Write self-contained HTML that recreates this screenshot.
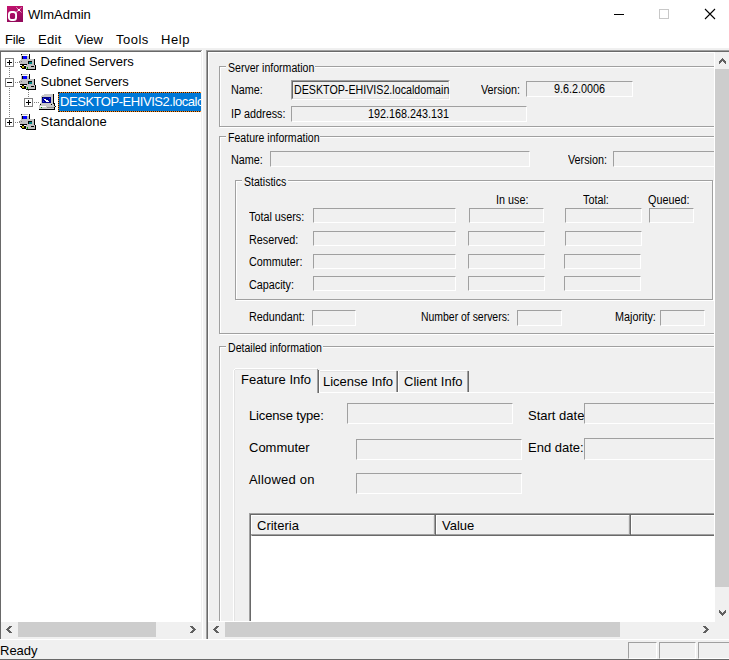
<!DOCTYPE html>
<html><head><meta charset="utf-8">
<style>
*{box-sizing:border-box;margin:0;padding:0}
html,body{width:729px;height:660px;overflow:hidden;background:#fff}
body{position:relative;font-family:"Liberation Sans",sans-serif;color:#000}
.a{position:absolute}
.t{position:absolute;white-space:pre;line-height:1;font-family:"Liberation Sans",sans-serif}
.ui{font-size:13px}
.dl{font-size:12px;transform:scaleX(0.9);transform-origin:0 0}
.hl{position:absolute;height:1px}
.vl{position:absolute;width:1px}
.sb{position:absolute;border-top:1px solid #a0a0a0;border-left:1px solid #a0a0a0;border-bottom:1px solid #fff;border-right:1px solid #fff;background:#f0f0f0}
.eb{position:absolute;border-top:1px solid #a0a0a0;border-left:1px solid #a0a0a0;border-bottom:1px solid #fff;border-right:1px solid #fff;background:#f0f0f0}
.eb:before{content:"";position:absolute;left:0;top:0;right:0;bottom:0;border-top:1px solid #696969;border-left:1px solid #696969;border-bottom:1px solid #e3e3e3;border-right:1px solid #e3e3e3}
.gl{position:absolute;background:#f0f0f0;padding:0 2px;white-space:pre;line-height:1;font-size:12px}
.gl span{display:inline-block;transform:scaleX(0.9);transform-origin:0 0;margin-right:-0.13em}
</style></head><body>
<svg class="a" style="left:7px;top:6px" width="16" height="16" viewBox="0 0 16 16">
<defs><linearGradient id="ig" x1="0" y1="0" x2="0.3" y2="1"><stop offset="0" stop-color="#c4136f"/><stop offset="1" stop-color="#940a5b"/></linearGradient></defs>
<rect x="0" y="0" width="16" height="16" fill="url(#ig)"/>
<rect x="1.95" y="5.95" width="7.1" height="8.1" rx="2.6" fill="none" stroke="#fff" stroke-width="1.9"/>
<path d="M9.3 1.3 L14.5 6.5 M14.5 1.3 L9.3 6.5" stroke="#fff" stroke-opacity="0.6" stroke-width="1"/>
<rect x="10.9" y="3" width="2" height="2" fill="#fff"/>
<path d="M8.6 6.6 L10.3 5" stroke="#fff" stroke-opacity="0.4" stroke-width="0.8"/>
</svg>
<div class="t ui" style="left:28px;top:8px">WlmAdmin</div>
<div class="hl" style="left:614px;top:14px;width:10px;background:#000"></div>
<div class="a" style="left:659px;top:9px;width:10px;height:10px;border:1px solid #c8c8c8"></div>
<svg class="a" style="left:704px;top:8px" width="12" height="12" viewBox="0 0 12 12"><path d="M1 1 L11 11 M11 1 L1 11" stroke="#000" stroke-width="1.1"/></svg>
<div class="t ui" style="left:5px;top:33px;letter-spacing:-0.2px">File</div>
<div class="t ui" style="left:38px;top:33px;letter-spacing:0.3px">Edit</div>
<div class="t ui" style="left:75px;top:33px">View</div>
<div class="t ui" style="left:116px;top:33px;letter-spacing:0.5px">Tools</div>
<div class="t ui" style="left:161px;top:33px;letter-spacing:0.6px">Help</div>
<div class="a" style="left:0;top:48px;width:729px;height:612px;background:#f0f0f0"></div>
<div class="a" style="left:0;top:50px;width:203px;height:590px;background:#fff"></div>
<div class="hl" style="left:0;top:50px;width:202px;background:#a0a0a0"></div>
<div class="hl" style="left:0;top:51px;width:201px;background:#696969"></div>
<div class="vl" style="left:0;top:51px;height:588px;background:#696969"></div>
<div class="vl" style="left:201px;top:52px;height:570px;background:#f0f0f0"></div>
<div class="vl" style="left:202px;top:50px;height:589px;background:#fff"></div>
<div class="a" style="left:1px;top:52px;width:200px;height:570px;overflow:hidden">
<div class="a" style="left:-1px;top:-52px;width:729px;height:660px">
<div class="a" style="left:9px;top:68px;width:1px;height:1px;background:#808080"></div>
<div class="a" style="left:9px;top:70px;width:1px;height:1px;background:#808080"></div>
<div class="a" style="left:9px;top:72px;width:1px;height:1px;background:#808080"></div>
<div class="a" style="left:9px;top:74px;width:1px;height:1px;background:#808080"></div>
<div class="a" style="left:9px;top:76px;width:1px;height:1px;background:#808080"></div>
<div class="a" style="left:9px;top:78px;width:1px;height:1px;background:#808080"></div>
<div class="a" style="left:9px;top:80px;width:1px;height:1px;background:#808080"></div>
<div class="a" style="left:9px;top:82px;width:1px;height:1px;background:#808080"></div>
<div class="a" style="left:9px;top:84px;width:1px;height:1px;background:#808080"></div>
<div class="a" style="left:9px;top:86px;width:1px;height:1px;background:#808080"></div>
<div class="a" style="left:9px;top:88px;width:1px;height:1px;background:#808080"></div>
<div class="a" style="left:9px;top:90px;width:1px;height:1px;background:#808080"></div>
<div class="a" style="left:9px;top:92px;width:1px;height:1px;background:#808080"></div>
<div class="a" style="left:9px;top:94px;width:1px;height:1px;background:#808080"></div>
<div class="a" style="left:9px;top:96px;width:1px;height:1px;background:#808080"></div>
<div class="a" style="left:9px;top:98px;width:1px;height:1px;background:#808080"></div>
<div class="a" style="left:9px;top:100px;width:1px;height:1px;background:#808080"></div>
<div class="a" style="left:9px;top:102px;width:1px;height:1px;background:#808080"></div>
<div class="a" style="left:9px;top:104px;width:1px;height:1px;background:#808080"></div>
<div class="a" style="left:9px;top:106px;width:1px;height:1px;background:#808080"></div>
<div class="a" style="left:9px;top:108px;width:1px;height:1px;background:#808080"></div>
<div class="a" style="left:9px;top:110px;width:1px;height:1px;background:#808080"></div>
<div class="a" style="left:9px;top:112px;width:1px;height:1px;background:#808080"></div>
<div class="a" style="left:9px;top:114px;width:1px;height:1px;background:#808080"></div>
<div class="a" style="left:9px;top:116px;width:1px;height:1px;background:#808080"></div>
<div class="a" style="left:15px;top:62px;width:1px;height:1px;background:#808080"></div>
<div class="a" style="left:17px;top:62px;width:1px;height:1px;background:#808080"></div>
<div class="a" style="left:19px;top:62px;width:1px;height:1px;background:#808080"></div>
<div class="a" style="left:15px;top:82px;width:1px;height:1px;background:#808080"></div>
<div class="a" style="left:17px;top:82px;width:1px;height:1px;background:#808080"></div>
<div class="a" style="left:19px;top:82px;width:1px;height:1px;background:#808080"></div>
<div class="a" style="left:15px;top:122px;width:1px;height:1px;background:#808080"></div>
<div class="a" style="left:17px;top:122px;width:1px;height:1px;background:#808080"></div>
<div class="a" style="left:19px;top:122px;width:1px;height:1px;background:#808080"></div>
<div class="a" style="left:28px;top:88px;width:1px;height:1px;background:#808080"></div>
<div class="a" style="left:28px;top:90px;width:1px;height:1px;background:#808080"></div>
<div class="a" style="left:28px;top:92px;width:1px;height:1px;background:#808080"></div>
<div class="a" style="left:28px;top:94px;width:1px;height:1px;background:#808080"></div>
<div class="a" style="left:28px;top:96px;width:1px;height:1px;background:#808080"></div>
<div class="a" style="left:34px;top:102px;width:1px;height:1px;background:#808080"></div>
<div class="a" style="left:36px;top:102px;width:1px;height:1px;background:#808080"></div>
<div class="a" style="left:38px;top:102px;width:1px;height:1px;background:#808080"></div>
<div class="a" style="left:5px;top:58px;width:9px;height:9px;border:1px solid #808080;background:#fff"></div>
<div class="hl" style="left:7px;top:62px;width:5px;background:#000"></div>
<div class="vl" style="left:9px;top:60px;height:5px;background:#000"></div>
<div class="a" style="left:5px;top:78px;width:9px;height:9px;border:1px solid #808080;background:#fff"></div>
<div class="hl" style="left:7px;top:82px;width:5px;background:#000"></div>
<div class="a" style="left:24px;top:98px;width:9px;height:9px;border:1px solid #808080;background:#fff"></div>
<div class="hl" style="left:26px;top:102px;width:5px;background:#000"></div>
<div class="vl" style="left:28px;top:100px;height:5px;background:#000"></div>
<div class="a" style="left:5px;top:118px;width:9px;height:9px;border:1px solid #808080;background:#fff"></div>
<div class="hl" style="left:7px;top:122px;width:5px;background:#000"></div>
<div class="vl" style="left:9px;top:120px;height:5px;background:#000"></div>
<svg class="a" style="left:19px;top:53px" width="18" height="18" viewBox="0 0 18 18" shape-rendering="crispEdges"><rect x="2" y="1" width="1" height="1" fill="#000"/><rect x="3" y="1" width="6" height="1" fill="#c0c0c0"/><rect x="9" y="1" width="1" height="1" fill="#fff"/><rect x="10" y="1" width="1" height="1" fill="#000"/><rect x="2" y="2" width="1" height="1" fill="#c0c0c0"/><rect x="3" y="2" width="7" height="1" fill="#fff"/><rect x="10" y="2" width="1" height="1" fill="#000"/><rect x="2" y="3" width="1" height="1" fill="#c0c0c0"/><rect x="3" y="3" width="1" height="1" fill="#000"/><rect x="4" y="3" width="4" height="1" fill="#0000ff"/><rect x="8" y="3" width="2" height="1" fill="#c0c0c0"/><rect x="10" y="3" width="1" height="1" fill="#000"/><rect x="2" y="4" width="1" height="1" fill="#c0c0c0"/><rect x="3" y="4" width="1" height="1" fill="#000"/><rect x="4" y="4" width="4" height="1" fill="#0000ff"/><rect x="8" y="4" width="2" height="1" fill="#c0c0c0"/><rect x="10" y="4" width="1" height="1" fill="#000"/><rect x="2" y="5" width="1" height="1" fill="#c0c0c0"/><rect x="3" y="5" width="1" height="1" fill="#000"/><rect x="4" y="5" width="4" height="1" fill="#0000ff"/><rect x="8" y="5" width="2" height="1" fill="#c0c0c0"/><rect x="10" y="5" width="1" height="1" fill="#000"/><rect x="2" y="6" width="13" height="1" fill="#c0c0c0"/><rect x="15" y="6" width="1" height="1" fill="#000"/><rect x="1" y="7" width="14" height="1" fill="#c0c0c0"/><rect x="15" y="7" width="1" height="1" fill="#000"/><rect x="0" y="8" width="1" height="1" fill="#808080"/><rect x="1" y="8" width="1" height="1" fill="#c0c0c0"/><rect x="2" y="8" width="1" height="1" fill="#808080"/><rect x="3" y="8" width="6" height="1" fill="#c0c0c0"/><rect x="9" y="8" width="4" height="1" fill="#000"/><rect x="13" y="8" width="2" height="1" fill="#c0c0c0"/><rect x="15" y="8" width="1" height="1" fill="#000"/><rect x="0" y="9" width="1" height="1" fill="#808080"/><rect x="1" y="9" width="8" height="1" fill="#c0c0c0"/><rect x="9" y="9" width="1" height="1" fill="#000"/><rect x="10" y="9" width="3" height="1" fill="#008080"/><rect x="13" y="9" width="2" height="1" fill="#c0c0c0"/><rect x="15" y="9" width="1" height="1" fill="#000"/><rect x="1" y="10" width="8" height="1" fill="#c0c0c0"/><rect x="9" y="10" width="1" height="1" fill="#000"/><rect x="10" y="10" width="3" height="1" fill="#008080"/><rect x="13" y="10" width="2" height="1" fill="#c0c0c0"/><rect x="15" y="10" width="1" height="1" fill="#000"/><rect x="1" y="11" width="7" height="1" fill="#000"/><rect x="8" y="11" width="7" height="1" fill="#c0c0c0"/><rect x="15" y="11" width="1" height="1" fill="#000"/><rect x="3" y="12" width="2" height="1" fill="#000"/><rect x="7" y="12" width="9" height="1" fill="#c0c0c0"/><rect x="16" y="12" width="1" height="1" fill="#000"/><rect x="1" y="13" width="2" height="1" fill="#000"/><rect x="3" y="13" width="2" height="1" fill="#b0b000"/><rect x="5" y="13" width="2" height="1" fill="#000"/><rect x="7" y="13" width="5" height="1" fill="#c0c0c0"/><rect x="12" y="13" width="3" height="1" fill="#000"/><rect x="15" y="13" width="1" height="1" fill="#c0c0c0"/><rect x="16" y="13" width="1" height="1" fill="#000"/><rect x="2" y="14" width="1" height="1" fill="#000"/><rect x="3" y="14" width="2" height="1" fill="#b0b000"/><rect x="5" y="14" width="2" height="1" fill="#000"/><rect x="7" y="14" width="1" height="1" fill="#c0c0c0"/><rect x="8" y="14" width="1" height="1" fill="#00a000"/><rect x="9" y="14" width="7" height="1" fill="#c0c0c0"/><rect x="16" y="14" width="1" height="1" fill="#000"/><rect x="3" y="15" width="4" height="1" fill="#000"/><rect x="7" y="15" width="1" height="1" fill="#c0c0c0"/><rect x="8" y="15" width="1" height="1" fill="#00a000"/><rect x="9" y="15" width="7" height="1" fill="#c0c0c0"/><rect x="16" y="15" width="1" height="1" fill="#000"/><rect x="7" y="16" width="10" height="1" fill="#000"/></svg>
<svg class="a" style="left:19px;top:73px" width="18" height="18" viewBox="0 0 18 18" shape-rendering="crispEdges"><rect x="2" y="1" width="1" height="1" fill="#000"/><rect x="3" y="1" width="6" height="1" fill="#c0c0c0"/><rect x="9" y="1" width="1" height="1" fill="#fff"/><rect x="10" y="1" width="1" height="1" fill="#000"/><rect x="2" y="2" width="1" height="1" fill="#c0c0c0"/><rect x="3" y="2" width="7" height="1" fill="#fff"/><rect x="10" y="2" width="1" height="1" fill="#000"/><rect x="2" y="3" width="1" height="1" fill="#c0c0c0"/><rect x="3" y="3" width="1" height="1" fill="#000"/><rect x="4" y="3" width="4" height="1" fill="#0000ff"/><rect x="8" y="3" width="2" height="1" fill="#c0c0c0"/><rect x="10" y="3" width="1" height="1" fill="#000"/><rect x="2" y="4" width="1" height="1" fill="#c0c0c0"/><rect x="3" y="4" width="1" height="1" fill="#000"/><rect x="4" y="4" width="4" height="1" fill="#0000ff"/><rect x="8" y="4" width="2" height="1" fill="#c0c0c0"/><rect x="10" y="4" width="1" height="1" fill="#000"/><rect x="2" y="5" width="1" height="1" fill="#c0c0c0"/><rect x="3" y="5" width="1" height="1" fill="#000"/><rect x="4" y="5" width="4" height="1" fill="#0000ff"/><rect x="8" y="5" width="2" height="1" fill="#c0c0c0"/><rect x="10" y="5" width="1" height="1" fill="#000"/><rect x="2" y="6" width="13" height="1" fill="#c0c0c0"/><rect x="15" y="6" width="1" height="1" fill="#000"/><rect x="1" y="7" width="14" height="1" fill="#c0c0c0"/><rect x="15" y="7" width="1" height="1" fill="#000"/><rect x="0" y="8" width="1" height="1" fill="#808080"/><rect x="1" y="8" width="1" height="1" fill="#c0c0c0"/><rect x="2" y="8" width="1" height="1" fill="#808080"/><rect x="3" y="8" width="6" height="1" fill="#c0c0c0"/><rect x="9" y="8" width="4" height="1" fill="#000"/><rect x="13" y="8" width="2" height="1" fill="#c0c0c0"/><rect x="15" y="8" width="1" height="1" fill="#000"/><rect x="0" y="9" width="1" height="1" fill="#808080"/><rect x="1" y="9" width="8" height="1" fill="#c0c0c0"/><rect x="9" y="9" width="1" height="1" fill="#000"/><rect x="10" y="9" width="3" height="1" fill="#008080"/><rect x="13" y="9" width="2" height="1" fill="#c0c0c0"/><rect x="15" y="9" width="1" height="1" fill="#000"/><rect x="1" y="10" width="8" height="1" fill="#c0c0c0"/><rect x="9" y="10" width="1" height="1" fill="#000"/><rect x="10" y="10" width="3" height="1" fill="#008080"/><rect x="13" y="10" width="2" height="1" fill="#c0c0c0"/><rect x="15" y="10" width="1" height="1" fill="#000"/><rect x="1" y="11" width="7" height="1" fill="#000"/><rect x="8" y="11" width="7" height="1" fill="#c0c0c0"/><rect x="15" y="11" width="1" height="1" fill="#000"/><rect x="3" y="12" width="2" height="1" fill="#000"/><rect x="7" y="12" width="9" height="1" fill="#c0c0c0"/><rect x="16" y="12" width="1" height="1" fill="#000"/><rect x="1" y="13" width="2" height="1" fill="#000"/><rect x="3" y="13" width="2" height="1" fill="#b0b000"/><rect x="5" y="13" width="2" height="1" fill="#000"/><rect x="7" y="13" width="5" height="1" fill="#c0c0c0"/><rect x="12" y="13" width="3" height="1" fill="#000"/><rect x="15" y="13" width="1" height="1" fill="#c0c0c0"/><rect x="16" y="13" width="1" height="1" fill="#000"/><rect x="2" y="14" width="1" height="1" fill="#000"/><rect x="3" y="14" width="2" height="1" fill="#b0b000"/><rect x="5" y="14" width="2" height="1" fill="#000"/><rect x="7" y="14" width="1" height="1" fill="#c0c0c0"/><rect x="8" y="14" width="1" height="1" fill="#00a000"/><rect x="9" y="14" width="7" height="1" fill="#c0c0c0"/><rect x="16" y="14" width="1" height="1" fill="#000"/><rect x="3" y="15" width="4" height="1" fill="#000"/><rect x="7" y="15" width="1" height="1" fill="#c0c0c0"/><rect x="8" y="15" width="1" height="1" fill="#00a000"/><rect x="9" y="15" width="7" height="1" fill="#c0c0c0"/><rect x="16" y="15" width="1" height="1" fill="#000"/><rect x="7" y="16" width="10" height="1" fill="#000"/></svg>
<svg class="a" style="left:19px;top:113px" width="18" height="18" viewBox="0 0 18 18" shape-rendering="crispEdges"><rect x="2" y="1" width="1" height="1" fill="#000"/><rect x="3" y="1" width="6" height="1" fill="#c0c0c0"/><rect x="9" y="1" width="1" height="1" fill="#fff"/><rect x="10" y="1" width="1" height="1" fill="#000"/><rect x="2" y="2" width="1" height="1" fill="#c0c0c0"/><rect x="3" y="2" width="7" height="1" fill="#fff"/><rect x="10" y="2" width="1" height="1" fill="#000"/><rect x="2" y="3" width="1" height="1" fill="#c0c0c0"/><rect x="3" y="3" width="1" height="1" fill="#000"/><rect x="4" y="3" width="4" height="1" fill="#0000ff"/><rect x="8" y="3" width="2" height="1" fill="#c0c0c0"/><rect x="10" y="3" width="1" height="1" fill="#000"/><rect x="2" y="4" width="1" height="1" fill="#c0c0c0"/><rect x="3" y="4" width="1" height="1" fill="#000"/><rect x="4" y="4" width="4" height="1" fill="#0000ff"/><rect x="8" y="4" width="2" height="1" fill="#c0c0c0"/><rect x="10" y="4" width="1" height="1" fill="#000"/><rect x="2" y="5" width="1" height="1" fill="#c0c0c0"/><rect x="3" y="5" width="1" height="1" fill="#000"/><rect x="4" y="5" width="4" height="1" fill="#0000ff"/><rect x="8" y="5" width="2" height="1" fill="#c0c0c0"/><rect x="10" y="5" width="1" height="1" fill="#000"/><rect x="2" y="6" width="13" height="1" fill="#c0c0c0"/><rect x="15" y="6" width="1" height="1" fill="#000"/><rect x="1" y="7" width="14" height="1" fill="#c0c0c0"/><rect x="15" y="7" width="1" height="1" fill="#000"/><rect x="0" y="8" width="1" height="1" fill="#808080"/><rect x="1" y="8" width="1" height="1" fill="#c0c0c0"/><rect x="2" y="8" width="1" height="1" fill="#808080"/><rect x="3" y="8" width="6" height="1" fill="#c0c0c0"/><rect x="9" y="8" width="4" height="1" fill="#000"/><rect x="13" y="8" width="2" height="1" fill="#c0c0c0"/><rect x="15" y="8" width="1" height="1" fill="#000"/><rect x="0" y="9" width="1" height="1" fill="#808080"/><rect x="1" y="9" width="8" height="1" fill="#c0c0c0"/><rect x="9" y="9" width="1" height="1" fill="#000"/><rect x="10" y="9" width="3" height="1" fill="#008080"/><rect x="13" y="9" width="2" height="1" fill="#c0c0c0"/><rect x="15" y="9" width="1" height="1" fill="#000"/><rect x="1" y="10" width="8" height="1" fill="#c0c0c0"/><rect x="9" y="10" width="1" height="1" fill="#000"/><rect x="10" y="10" width="3" height="1" fill="#008080"/><rect x="13" y="10" width="2" height="1" fill="#c0c0c0"/><rect x="15" y="10" width="1" height="1" fill="#000"/><rect x="1" y="11" width="7" height="1" fill="#000"/><rect x="8" y="11" width="7" height="1" fill="#c0c0c0"/><rect x="15" y="11" width="1" height="1" fill="#000"/><rect x="3" y="12" width="2" height="1" fill="#000"/><rect x="7" y="12" width="9" height="1" fill="#c0c0c0"/><rect x="16" y="12" width="1" height="1" fill="#000"/><rect x="1" y="13" width="2" height="1" fill="#000"/><rect x="3" y="13" width="2" height="1" fill="#b0b000"/><rect x="5" y="13" width="2" height="1" fill="#000"/><rect x="7" y="13" width="5" height="1" fill="#c0c0c0"/><rect x="12" y="13" width="3" height="1" fill="#000"/><rect x="15" y="13" width="1" height="1" fill="#c0c0c0"/><rect x="16" y="13" width="1" height="1" fill="#000"/><rect x="2" y="14" width="1" height="1" fill="#000"/><rect x="3" y="14" width="2" height="1" fill="#b0b000"/><rect x="5" y="14" width="2" height="1" fill="#000"/><rect x="7" y="14" width="1" height="1" fill="#c0c0c0"/><rect x="8" y="14" width="1" height="1" fill="#00a000"/><rect x="9" y="14" width="7" height="1" fill="#c0c0c0"/><rect x="16" y="14" width="1" height="1" fill="#000"/><rect x="3" y="15" width="4" height="1" fill="#000"/><rect x="7" y="15" width="1" height="1" fill="#c0c0c0"/><rect x="8" y="15" width="1" height="1" fill="#00a000"/><rect x="9" y="15" width="7" height="1" fill="#c0c0c0"/><rect x="16" y="15" width="1" height="1" fill="#000"/><rect x="7" y="16" width="10" height="1" fill="#000"/></svg>
<svg class="a" style="left:37px;top:92px" width="20" height="20" viewBox="0 0 20 20" shape-rendering="crispEdges"><rect x="5" y="2" width="2" height="1" fill="#ffffff"/><rect x="7" y="2" width="9" height="1" fill="#c8c8c8"/><rect x="16" y="2" width="1" height="1" fill="#000"/><rect x="4" y="3" width="1" height="1" fill="#ffffff"/><rect x="5" y="3" width="11" height="1" fill="#c8c8c8"/><rect x="16" y="3" width="1" height="1" fill="#000"/><rect x="3" y="4" width="1" height="1" fill="#ffffff"/><rect x="4" y="4" width="12" height="1" fill="#c8c8c8"/><rect x="16" y="4" width="1" height="1" fill="#000"/><rect x="3" y="5" width="1" height="1" fill="#ffffff"/><rect x="4" y="5" width="1" height="1" fill="#c8c8c8"/><rect x="5" y="5" width="1" height="1" fill="#000"/><rect x="6" y="5" width="8" height="1" fill="#000090"/><rect x="14" y="5" width="2" height="1" fill="#c8c8c8"/><rect x="16" y="5" width="1" height="1" fill="#000"/><rect x="3" y="6" width="1" height="1" fill="#ffffff"/><rect x="4" y="6" width="1" height="1" fill="#c8c8c8"/><rect x="5" y="6" width="1" height="1" fill="#000090"/><rect x="6" y="6" width="1" height="1" fill="#2040ff"/><rect x="7" y="6" width="5" height="1" fill="#000090"/><rect x="12" y="6" width="1" height="1" fill="#2040ff"/><rect x="13" y="6" width="1" height="1" fill="#000090"/><rect x="14" y="6" width="2" height="1" fill="#c8c8c8"/><rect x="16" y="6" width="1" height="1" fill="#000"/><rect x="3" y="7" width="1" height="1" fill="#ffffff"/><rect x="4" y="7" width="1" height="1" fill="#c8c8c8"/><rect x="5" y="7" width="2" height="1" fill="#000090"/><rect x="7" y="7" width="2" height="1" fill="#ffffff"/><rect x="9" y="7" width="5" height="1" fill="#000090"/><rect x="14" y="7" width="2" height="1" fill="#c8c8c8"/><rect x="16" y="7" width="1" height="1" fill="#000"/><rect x="3" y="8" width="1" height="1" fill="#ffffff"/><rect x="4" y="8" width="1" height="1" fill="#c8c8c8"/><rect x="5" y="8" width="3" height="1" fill="#000090"/><rect x="8" y="8" width="3" height="1" fill="#ffffff"/><rect x="11" y="8" width="3" height="1" fill="#000090"/><rect x="14" y="8" width="2" height="1" fill="#c8c8c8"/><rect x="16" y="8" width="1" height="1" fill="#000"/><rect x="3" y="9" width="1" height="1" fill="#ffffff"/><rect x="4" y="9" width="1" height="1" fill="#c8c8c8"/><rect x="5" y="9" width="1" height="1" fill="#000090"/><rect x="6" y="9" width="1" height="1" fill="#2040ff"/><rect x="7" y="9" width="2" height="1" fill="#000090"/><rect x="9" y="9" width="3" height="1" fill="#ffffff"/><rect x="12" y="9" width="2" height="1" fill="#000090"/><rect x="14" y="9" width="2" height="1" fill="#c8c8c8"/><rect x="16" y="9" width="1" height="1" fill="#000"/><rect x="3" y="10" width="1" height="1" fill="#ffffff"/><rect x="4" y="10" width="1" height="1" fill="#c8c8c8"/><rect x="5" y="10" width="9" height="1" fill="#000090"/><rect x="14" y="10" width="2" height="1" fill="#c8c8c8"/><rect x="16" y="10" width="1" height="1" fill="#000"/><rect x="3" y="11" width="13" height="1" fill="#c8c8c8"/><rect x="16" y="11" width="2" height="1" fill="#000"/><rect x="3" y="12" width="1" height="1" fill="#000"/><rect x="4" y="12" width="10" height="1" fill="#c8c8c8"/><rect x="14" y="12" width="1" height="1" fill="#000"/><rect x="15" y="12" width="2" height="1" fill="#c8c8c8"/><rect x="17" y="12" width="1" height="1" fill="#000"/><rect x="2" y="13" width="15" height="1" fill="#c8c8c8"/><rect x="17" y="13" width="1" height="1" fill="#000"/><rect x="2" y="14" width="1" height="1" fill="#c8c8c8"/><rect x="3" y="14" width="6" height="1" fill="#ffffff"/><rect x="9" y="14" width="9" height="1" fill="#c8c8c8"/><rect x="18" y="14" width="1" height="1" fill="#000"/><rect x="2" y="15" width="2" height="1" fill="#c8c8c8"/><rect x="4" y="15" width="1" height="1" fill="#00a000"/><rect x="5" y="15" width="5" height="1" fill="#c8c8c8"/><rect x="10" y="15" width="7" height="1" fill="#909090"/><rect x="17" y="15" width="1" height="1" fill="#000"/><rect x="2" y="16" width="15" height="1" fill="#c8c8c8"/><rect x="17" y="16" width="1" height="1" fill="#000"/><rect x="2" y="17" width="16" height="1" fill="#000"/></svg>
<div class="t ui" style="left:40.5px;top:55px;">Defined Servers</div>
<div class="t ui" style="left:40.5px;top:75px;letter-spacing:-0.1px">Subnet Servers</div>
<div class="t ui" style="left:40.5px;top:115px;letter-spacing:0.05px">Standalone</div>
<div class="a" style="left:58px;top:92px;width:150px;height:20px;background:#0078d7;border:1px solid #ff8c1a"></div>
<div class="a" style="left:58px;top:92px;width:150px;height:20px;border:1px dotted #1a1a1a"></div>
<div class="t ui" style="left:60px;top:95px;color:#fff;letter-spacing:-0.45px">DESKTOP-EHIVIS2.localc</div>
</div></div>
<div class="a" style="left:1px;top:622px;width:201px;height:17px;background:#f0f0f0"></div>
<div class="a" style="left:18px;top:622px;width:138px;height:15px;background:#cdcdcd"></div>
<div class="a" style="left:9px;top:626px;width:3px;height:1px;background:#606060"></div><div class="a" style="left:8px;top:627px;width:3px;height:1px;background:#606060"></div><div class="a" style="left:7px;top:628px;width:3px;height:1px;background:#606060"></div><div class="a" style="left:6px;top:629px;width:3px;height:1px;background:#606060"></div><div class="a" style="left:7px;top:630px;width:3px;height:1px;background:#606060"></div><div class="a" style="left:8px;top:631px;width:3px;height:1px;background:#606060"></div><div class="a" style="left:9px;top:632px;width:3px;height:1px;background:#606060"></div>
<div class="a" style="left:190px;top:626px;width:3px;height:1px;background:#606060"></div><div class="a" style="left:191px;top:627px;width:3px;height:1px;background:#606060"></div><div class="a" style="left:192px;top:628px;width:3px;height:1px;background:#606060"></div><div class="a" style="left:193px;top:629px;width:3px;height:1px;background:#606060"></div><div class="a" style="left:192px;top:630px;width:3px;height:1px;background:#606060"></div><div class="a" style="left:191px;top:631px;width:3px;height:1px;background:#606060"></div><div class="a" style="left:190px;top:632px;width:3px;height:1px;background:#606060"></div>
<div class="hl" style="left:206px;top:50px;width:523px;background:#a0a0a0"></div>
<div class="hl" style="left:207px;top:51px;width:522px;background:#696969"></div>
<div class="vl" style="left:206px;top:50px;height:589px;background:#a0a0a0"></div>
<div class="vl" style="left:207px;top:51px;height:588px;background:#696969"></div>
<div class="vl" style="left:714px;top:52px;height:570px;background:#fff"></div>
<div class="vl" style="left:208px;top:52px;height:570px;background:#fff"></div>
<div class="hl" style="left:208px;top:52px;width:507px;background:#fff"></div>
<div class="hl" style="left:208px;top:621px;width:507px;background:#fff"></div>
<div class="a" style="left:209px;top:53px;width:505px;height:568px;overflow:hidden"><div class="a" style="left:-209px;top:-53px;width:729px;height:660px">
<div class="a" style="left:220px;top:67px;width:542px;height:61px;border:1px solid #fff"></div>
<div class="a" style="left:219px;top:66px;width:542px;height:61px;border:1px solid #a0a0a0"></div>
<div class="a" style="left:226px;top:63px;width:89px;height:8px;background:#f0f0f0"></div>
<div class="t dl" style="left:227.5px;top:61.5px;transform:scaleX(0.88)">Server information</div>
<div class="t dl" style="left:231px;top:84px;">Name:</div>
<div class="eb" style="left:291px;top:80px;width:159px;height:20px"></div>
<div class="t dl" style="left:293.5px;top:84px;transform:scaleX(0.89)">DESKTOP-EHIVIS2.localdomain</div>
<div class="t dl" style="left:481px;top:84px;">Version:</div>
<div class="sb" style="left:526px;top:81px;width:107px;height:16px"></div>
<div class="t dl" style="left:554px;top:83px;">9.6.2.0006</div>
<div class="t dl" style="left:231px;top:108px;">IP address:</div>
<div class="sb" style="left:291px;top:106px;width:236px;height:16px"></div>
<div class="t dl" style="left:368px;top:108px;">192.168.243.131</div>
<div class="a" style="left:220px;top:137px;width:542px;height:198px;border:1px solid #fff"></div>
<div class="a" style="left:219px;top:136px;width:542px;height:198px;border:1px solid #a0a0a0"></div>
<div class="a" style="left:226px;top:133px;width:94px;height:8px;background:#f0f0f0"></div>
<div class="t dl" style="left:227.5px;top:131.5px;transform:scaleX(0.88)">Feature information</div>
<div class="t dl" style="left:231px;top:154px;">Name:</div>
<div class="sb" style="left:270px;top:151px;width:260px;height:16px"></div>
<div class="t dl" style="left:568px;top:154px;">Version:</div>
<div class="sb" style="left:613px;top:151px;width:148px;height:16px"></div>
<div class="a" style="left:236px;top:181px;width:478px;height:120px;border:1px solid #fff"></div>
<div class="a" style="left:235px;top:180px;width:478px;height:120px;border:1px solid #a0a0a0"></div>
<div class="a" style="left:242px;top:177px;width:46px;height:8px;background:#f0f0f0"></div>
<div class="t dl" style="left:243.5px;top:175.5px;transform:scaleX(0.88)">Statistics</div>
<div class="t dl" style="left:496px;top:194px;">In use:</div>
<div class="t dl" style="left:583px;top:194px;">Total:</div>
<div class="t dl" style="left:648px;top:194px;">Queued:</div>
<div class="t dl" style="left:249px;top:211px;">Total users:</div>
<div class="sb" style="left:313px;top:208px;width:143px;height:15px"></div>
<div class="sb" style="left:469px;top:208px;width:75px;height:15px"></div>
<div class="sb" style="left:565px;top:208px;width:77px;height:15px"></div>
<div class="sb" style="left:649px;top:208px;width:45px;height:15px"></div>
<div class="t dl" style="left:249px;top:234px;">Reserved:</div>
<div class="sb" style="left:313px;top:231px;width:143px;height:15px"></div>
<div class="sb" style="left:468px;top:231px;width:77px;height:15px"></div>
<div class="sb" style="left:565px;top:231px;width:77px;height:15px"></div>
<div class="t dl" style="left:249px;top:256px;">Commuter:</div>
<div class="sb" style="left:313px;top:254px;width:143px;height:15px"></div>
<div class="sb" style="left:468px;top:254px;width:77px;height:15px"></div>
<div class="sb" style="left:564px;top:254px;width:77px;height:15px"></div>
<div class="t dl" style="left:249px;top:279px;">Capacity:</div>
<div class="sb" style="left:313px;top:276px;width:143px;height:15px"></div>
<div class="sb" style="left:468px;top:276px;width:77px;height:15px"></div>
<div class="sb" style="left:564px;top:276px;width:77px;height:15px"></div>
<div class="t dl" style="left:249px;top:311px;">Redundant:</div>
<div class="sb" style="left:312px;top:310px;width:44px;height:16px"></div>
<div class="t dl" style="left:420.5px;top:311px;transform:scaleX(0.87)">Number of servers:</div>
<div class="sb" style="left:517px;top:310px;width:45px;height:16px"></div>
<div class="t dl" style="left:615px;top:311px;">Majority:</div>
<div class="sb" style="left:660px;top:310px;width:45px;height:16px"></div>
<div class="a" style="left:220px;top:347px;width:542px;height:555px;border:1px solid #fff"></div>
<div class="a" style="left:219px;top:346px;width:542px;height:555px;border:1px solid #a0a0a0"></div>
<div class="a" style="left:226px;top:343px;width:97px;height:8px;background:#f0f0f0"></div>
<div class="t dl" style="left:227.5px;top:341.5px;transform:scaleX(0.88)">Detailed information</div>
<div class="hl" style="left:317px;top:392px;width:500px;background:#fff"></div>
<div class="vl" style="left:233px;top:370px;height:300px;background:#fff"></div>
<div class="vl" style="left:234px;top:370px;height:300px;background:#e3e3e3"></div>
<div class="hl" style="left:235px;top:368px;width:82px;background:#fff"></div>
<div class="hl" style="left:235px;top:369px;width:82px;background:#e3e3e3"></div>
<div class="hl" style="left:234px;top:369px;width:1px;background:#fff"></div>
<div class="hl" style="left:317px;top:369px;width:1px;background:#a0a0a0"></div>
<div class="vl" style="left:317px;top:370px;height:23px;background:#a0a0a0"></div>
<div class="vl" style="left:318px;top:370px;height:23px;background:#696969"></div>
<div class="hl" style="left:320px;top:370px;width:76px;background:#fff"></div>
<div class="hl" style="left:320px;top:371px;width:76px;background:#e3e3e3"></div>
<div class="vl" style="left:319px;top:371px;height:21px;background:#fff"></div>
<div class="vl" style="left:396px;top:371px;height:21px;background:#a0a0a0"></div>
<div class="vl" style="left:397px;top:371px;height:21px;background:#696969"></div>
<div class="hl" style="left:399px;top:370px;width:68px;background:#fff"></div>
<div class="hl" style="left:399px;top:371px;width:68px;background:#e3e3e3"></div>
<div class="vl" style="left:398px;top:371px;height:21px;background:#fff"></div>
<div class="vl" style="left:467px;top:371px;height:21px;background:#a0a0a0"></div>
<div class="vl" style="left:468px;top:371px;height:21px;background:#696969"></div>
<div class="t ui" style="left:241px;top:373px;">Feature Info</div>
<div class="t ui" style="left:323px;top:375px;">License Info</div>
<div class="t ui" style="left:404px;top:375px;">Client Info</div>
<div class="t ui" style="left:249px;top:409px;letter-spacing:-0.15px">License type:</div>
<div class="sb" style="left:347px;top:403px;width:166px;height:21px"></div>
<div class="t ui" style="left:249px;top:441px;">Commuter</div>
<div class="sb" style="left:356px;top:439px;width:166px;height:21px"></div>
<div class="t ui" style="left:249px;top:473px;letter-spacing:0.2px">Allowed on</div>
<div class="sb" style="left:356px;top:473px;width:166px;height:21px"></div>
<div class="t ui" style="left:528px;top:409px;">Start date</div>
<div class="sb" style="left:584px;top:403px;width:177px;height:21px"></div>
<div class="t ui" style="left:528px;top:441px;">End date:</div>
<div class="sb" style="left:584px;top:438px;width:177px;height:22px"></div>
<div class="a" style="left:249px;top:513px;width:600px;height:200px;border-left:1px solid #a0a0a0;border-top:1px solid #a0a0a0;background:#fff"></div>
<div class="a" style="left:250px;top:514px;width:600px;height:200px;border-left:1px solid #696969;border-top:1px solid #696969"></div>
<div class="a" style="left:251px;top:515px;width:600px;height:21px;background:#f0f0f0;border-bottom:1px solid #696969;border-top:1px solid #fff;border-left:1px solid #fff"></div>
<div class="hl" style="left:251px;top:534px;width:600px;background:#a0a0a0"></div>
<div class="vl" style="left:433px;top:516px;height:18px;background:#e3e3e3"></div>
<div class="vl" style="left:434px;top:515px;height:20px;background:#a0a0a0"></div>
<div class="vl" style="left:435px;top:515px;height:20px;background:#696969"></div>
<div class="vl" style="left:436px;top:516px;height:18px;background:#fff"></div>
<div class="vl" style="left:628px;top:516px;height:18px;background:#e3e3e3"></div>
<div class="vl" style="left:629px;top:515px;height:20px;background:#a0a0a0"></div>
<div class="vl" style="left:630px;top:515px;height:20px;background:#696969"></div>
<div class="vl" style="left:631px;top:516px;height:18px;background:#fff"></div>
<div class="t ui" style="left:257px;top:519px;">Criteria</div>
<div class="t ui" style="left:442px;top:519px;">Value</div>
</div></div>
<div class="a" style="left:715px;top:69px;width:15px;height:518px;background:#cdcdcd"></div>
<div class="a" style="left:719px;top:61px;width:1px;height:3px;background:#606060"></div><div class="a" style="left:720px;top:60px;width:1px;height:3px;background:#606060"></div><div class="a" style="left:721px;top:59px;width:1px;height:3px;background:#606060"></div><div class="a" style="left:722px;top:58px;width:1px;height:3px;background:#606060"></div><div class="a" style="left:723px;top:59px;width:1px;height:3px;background:#606060"></div><div class="a" style="left:724px;top:60px;width:1px;height:3px;background:#606060"></div><div class="a" style="left:725px;top:61px;width:1px;height:3px;background:#606060"></div>
<div class="a" style="left:719px;top:610px;width:1px;height:3px;background:#606060"></div><div class="a" style="left:720px;top:611px;width:1px;height:3px;background:#606060"></div><div class="a" style="left:721px;top:612px;width:1px;height:3px;background:#606060"></div><div class="a" style="left:722px;top:613px;width:1px;height:3px;background:#606060"></div><div class="a" style="left:723px;top:612px;width:1px;height:3px;background:#606060"></div><div class="a" style="left:724px;top:611px;width:1px;height:3px;background:#606060"></div><div class="a" style="left:725px;top:610px;width:1px;height:3px;background:#606060"></div>
<div class="a" style="left:225px;top:622px;width:395px;height:15px;background:#cdcdcd"></div>
<div class="a" style="left:216px;top:626px;width:3px;height:1px;background:#606060"></div><div class="a" style="left:215px;top:627px;width:3px;height:1px;background:#606060"></div><div class="a" style="left:214px;top:628px;width:3px;height:1px;background:#606060"></div><div class="a" style="left:213px;top:629px;width:3px;height:1px;background:#606060"></div><div class="a" style="left:214px;top:630px;width:3px;height:1px;background:#606060"></div><div class="a" style="left:215px;top:631px;width:3px;height:1px;background:#606060"></div><div class="a" style="left:216px;top:632px;width:3px;height:1px;background:#606060"></div>
<div class="a" style="left:703px;top:626px;width:3px;height:1px;background:#606060"></div><div class="a" style="left:704px;top:627px;width:3px;height:1px;background:#606060"></div><div class="a" style="left:705px;top:628px;width:3px;height:1px;background:#606060"></div><div class="a" style="left:706px;top:629px;width:3px;height:1px;background:#606060"></div><div class="a" style="left:705px;top:630px;width:3px;height:1px;background:#606060"></div><div class="a" style="left:704px;top:631px;width:3px;height:1px;background:#606060"></div><div class="a" style="left:703px;top:632px;width:3px;height:1px;background:#606060"></div>
<div class="hl" style="left:0;top:639px;width:729px;background:#fff"></div>
<div class="sb" style="left:628px;top:642px;width:29px;height:17px"></div>
<div class="sb" style="left:659px;top:642px;width:37px;height:17px"></div>
<div class="sb" style="left:698px;top:642px;width:40px;height:17px"></div>
<div class="hl" style="left:0;top:659px;width:729px;background:#696969"></div>
<div class="t ui" style="left:0px;top:644px">Ready</div>
</body></html>
